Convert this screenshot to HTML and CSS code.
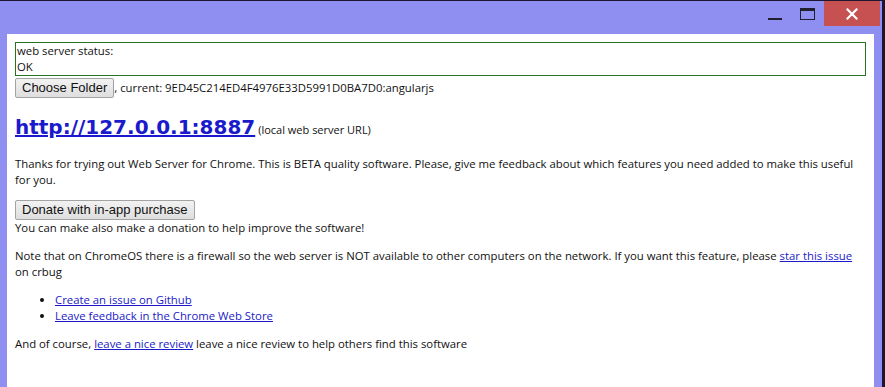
FILE: index.html
```html
<!DOCTYPE html>
<html>
<head>
<meta charset="utf-8">
<link rel="stylesheet" href="styles.css">
</head>
<body>
<div class="desktop">
  <div class="window">
    <div class="titlebar">
      <div class="ctl ctl-min"><span class="min-glyph"></span></div>
      <div class="ctl ctl-max"><span class="max-glyph"></span></div>
      <div class="ctl ctl-close">
        <svg width="12" height="12" viewBox="0 0 12 12"><path d="M1.5 1.5 L10.5 10.5 M10.5 1.5 L1.5 10.5" stroke="#fff" stroke-width="2.2" stroke-linecap="square"/></svg>
      </div>
    </div>
    <div class="frame">
      <div class="content">
        <div class="status">web server status:<br>OK</div>
        <div class="folder-row"><button class="btn">Choose Folder</button><span>, current: 9ED45C214ED4F4976E33D5991D0BA7D0:angularjs</span></div>
        <div class="url-head"><a class="url" href="#">http://127.0.0.1:8887</a> <span class="url-note">(local web server URL)</span></div>
        <p>Thanks for trying out Web Server for Chrome. This is BETA quality software. Please, give me feedback about which features you need added to make this useful for you.</p>
        <div class="donate"><button class="btn">Donate with in-app purchase</button><br>You can make also make a donation to help improve the software!</div>
        <p>Note that on ChromeOS there is a firewall so the web server is NOT available to other computers on the network. If you want this feature, please <a href="#">star this issue</a> on crbug</p>
        <ul>
          <li><a href="#">Create an issue on Github</a></li>
          <li><a href="#">Leave feedback in the Chrome Web Store</a></li>
        </ul>
        <p>And of course, <a href="#">leave a nice review</a> leave a nice review to help others find this software</p>
      </div>
    </div>
  </div>
  <div class="edge"></div>
</div>
</body>
</html>
```
FILE: styles.css
```css
* { box-sizing: border-box; }
html, body { margin: 0; padding: 0; width: 885px; height: 387px; overflow: hidden; background: #1e1530; }
.desktop { display: flex; width: 885px; height: 387px; padding-top: 1px; }
.window { width: 882px; height: 386px; background: #8f8ff2; display: flex; flex-direction: column; }
.edge { flex: 1; background: #1e1530; }
.titlebar { height: 33px; display: flex; justify-content: flex-end; align-items: flex-start; padding-right: 2px; }
.ctl { height: 25px; display: flex; align-items: center; justify-content: center; }
.ctl-min { width: 30px; margin-right: 2px; }
.ctl-max { width: 30px; margin-right: 2px; }
.ctl-close { width: 56px; background: #c75050; }
.min-glyph { width: 14px; height: 2px; background: #1f1f2e; margin-top: 10px; }
.max-glyph { width: 15px; height: 12px; border: 1px solid #1f1f2e; border-top-width: 3px; margin-top: 1px; }
.frame { flex: 1; padding: 0 8px 0 7px; display: flex; }
.content { flex: 1; background: #fff; padding: 8px; font-family: "Open Sans", "Noto Sans", sans-serif; font-size: 11.35px; line-height: 16px; color: #111; }
.status { border: 1px solid #267326; padding: 0 1px; }
.folder-row { display: flex; align-items: baseline; margin-top: 2px; }
.btn { font-family: "Liberation Sans", Arial, sans-serif; font-size: 13px; color: #111; height: 20px; padding: 0 6px; border: 1px solid #a3a3a3; border-radius: 2px; background: linear-gradient(#f2f2f2, #dedede); line-height: 16px; margin: 0; }
.url-head { margin: 15px 0 12px; line-height: 29px; }
.url { font-family: "DejaVu Sans", Verdana, sans-serif; font-weight: bold; font-size: 20px; color: #1a1acc; }
.url-note { font-size: 11px; }
a { color: #1a1ac8; }
p { margin: 12px 0; }
.donate { margin: 0; }
ul { margin: 12px 0; padding-left: 40px; }
```
